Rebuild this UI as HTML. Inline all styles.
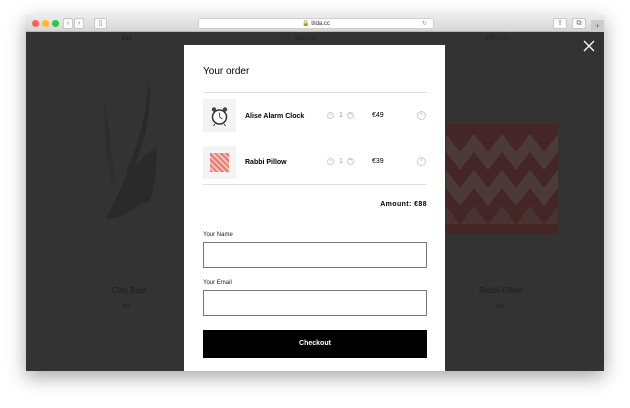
<!DOCTYPE html>
<html><head><meta charset="utf-8"><style>
*{margin:0;padding:0;box-sizing:border-box}
body{width:630px;height:408px;background:#fff;position:relative;overflow:hidden;font-family:"Liberation Sans",sans-serif}
.win{position:absolute;left:26px;top:15px;width:578px;height:356px;box-shadow:0 6px 18px rgba(0,0,0,.35);background:#333}
.tb{position:absolute;left:0;top:0;width:578px;height:17px;background:linear-gradient(#ececec,#d6d6d6);border-bottom:1px solid #b8b8b8}
.dot{position:absolute;top:5px;width:7px;height:7px;border-radius:50%}
.btn{position:absolute;top:3px;height:11px;background:#fbfbfb;border:1px solid #c8c8c8;border-radius:2px;font-size:7px;color:#777;text-align:center;line-height:9px}
.url{position:absolute;left:172px;top:3px;width:236px;height:11px;background:#fff;border:1px solid #d0d0d0;border-radius:3px;font-size:6px;text-align:center;line-height:10px;color:#333}
.content{position:absolute;left:0;top:17px;width:578px;height:339px;background:#333;overflow:hidden}
.modal{position:absolute;left:158px;top:13px;width:261px;height:330px;background:#fff}
.t{position:absolute;font-size:9px;color:#000}
.b{font-weight:bold;font-size:7px}
.line{position:absolute;left:19px;width:224px;height:1px;background:#e0e0e0}
.img{position:absolute;left:19px;width:33px;height:33px;background:#f3f3f3}
.ci{position:absolute;width:7px;height:7px;border:1px solid #ccc;border-radius:50%;font-size:6px;line-height:5px;text-align:center;color:#bbb}
.inp{position:absolute;left:19px;width:224px;height:26px;border:1px solid #777}
.lab{position:absolute;left:19px;font-size:6px;color:#222}
</style></head><body>
<div class="win">
 <div class="tb">
  <div class="dot" style="left:6px;background:#fc5f57"></div>
  <div class="dot" style="left:16px;background:#fdbc2e"></div>
  <div class="dot" style="left:26px;background:#29c840"></div>
  <div class="btn" style="left:37px;width:10px">‹</div>
  <div class="btn" style="left:48px;width:10px">›</div>
  <div class="btn" style="left:68px;width:13px">▯</div>
  <div class="url">🔒 tilda.cc<span style="position:absolute;right:6px;color:#999">↻</span></div>
  <div class="btn" style="left:527px;width:14px">⇧</div>
  <div class="btn" style="left:546px;width:14px">⧉</div>
  <div style="position:absolute;left:565px;top:5px;width:13px;height:12px;background:#ccc;font-size:9px;color:#777;text-align:center;line-height:12px">+</div>
 </div>
 <div class="content">
  <div style="position:absolute;left:96px;top:4px;font-size:6px;color:#222">€49</div>
  <div style="position:absolute;left:269px;top:4px;font-size:6px;color:#222">€69 <s style="color:#2a2a2a">€99</s></div>
  <div style="position:absolute;left:459px;top:4px;font-size:6px;color:#222">€79 <s style="color:#2a2a2a">€100</s></div>
  <svg style="position:absolute;left:70px;top:40px" width="70" height="170" viewBox="0 0 70 170">
   <path d="M8 25 C14 50 14 85 20 110 L16 112 C10 85 8 55 8 25Z" fill="#2e2e2e"/>
   <path d="M52 8 C58 30 50 70 34 105 L30 100 C44 70 52 35 52 8Z" fill="#2a2a2a"/>
   <path d="M32 100 C42 90 55 78 60 75 C62 95 58 115 54 130 L44 132 C34 140 22 148 10 146 C20 130 26 112 32 100Z" fill="#2a2a2a"/>
  </svg>
  <div style="position:absolute;left:86px;top:254px;font-size:8px;color:#1e1e1e">Clay Bust</div>
  <div style="position:absolute;left:96px;top:272px;font-size:5px;color:#1e1e1e">€57</div>
  <svg style="position:absolute;left:420px;top:92px" width="112" height="110" viewBox="0 0 112 110">
   <rect x="0" y="0" width="112" height="110" fill="#452626"/>
   <g fill="#4c3a3a">
    <path d="M0 10 L14 28 L28 10 L42 28 L56 10 L70 28 L84 10 L98 28 L112 10 V28 L98 46 L84 28 L70 46 L56 28 L42 46 L28 28 L14 46 L0 28Z"/>
    <path d="M0 46 L14 64 L28 46 L42 64 L56 46 L70 64 L84 46 L98 64 L112 46 V64 L98 82 L84 64 L70 82 L56 64 L42 82 L28 64 L14 82 L0 64Z"/>
    <path d="M0 82 L14 100 L28 82 L42 100 L56 82 L70 100 L84 82 L98 100 L112 82 V100 L0 100Z" opacity=".6"/>
   </g>
  </svg>
  <div style="position:absolute;left:453px;top:254px;font-size:8px;color:#1e1e1e">Rabbi Pillow</div>
  <div style="position:absolute;left:470px;top:272px;font-size:5px;color:#1e1e1e">€39</div>
  <svg style="position:absolute;left:557px;top:8px" width="12" height="12"><path d="M1 1L11 11M11 1L1 11" stroke="#fff" stroke-width="1.3"/></svg>
  <div class="modal">
   <div class="t" style="left:19px;top:21px;font-size:10px">Your order</div>
   <div class="line" style="top:47px"></div>
   <div class="img" style="top:54px">
    <svg width="33" height="33" viewBox="0 0 33 33"><circle cx="16.5" cy="18" r="7" fill="#fff" stroke="#333" stroke-width="1.5"/><circle cx="11" cy="10.5" r="2.2" fill="#444"/><circle cx="22" cy="10.5" r="2.2" fill="#444"/><path d="M16.5 18V13.5M16.5 18l3 2" stroke="#333" stroke-width="0.8"/><path d="M12 25l-1.5 2M21 25l1.5 2" stroke="#333"/></svg>
   </div>
   <div class="t b" style="left:61px;top:68px">Alise Alarm Clock</div>
   <div class="ci" style="left:143px;top:67px">−</div><div class="t" style="left:155px;top:67px;font-size:7px;color:#999">1</div><div class="ci" style="left:163px;top:67px">+</div>
   <div class="t" style="left:188px;top:67px;font-size:7px">€49</div>
   <div class="ci" style="left:233px;top:66px;width:9px;height:9px;line-height:7px">×</div>
   <div class="img" style="top:101px"><div style="position:absolute;left:7px;top:7px;width:19px;height:19px;background:repeating-linear-gradient(45deg,#e57a6e 0 2px,#f6c2bb 2px 4px)"></div></div>
   <div class="t b" style="left:61px;top:114px">Rabbi Pillow</div>
   <div class="ci" style="left:143px;top:113px">−</div><div class="t" style="left:155px;top:113px;font-size:7px;color:#999">1</div><div class="ci" style="left:163px;top:113px">+</div>
   <div class="t" style="left:188px;top:113px;font-size:7px">€39</div>
   <div class="ci" style="left:233px;top:112px;width:9px;height:9px;line-height:7px">×</div>
   <div class="line" style="top:139px"></div>
   <div class="t b" style="right:18px;top:156px;letter-spacing:.4px">Amount: €88</div>
   <div class="lab" style="top:187px">Your Name</div>
   <div class="inp" style="top:197px"></div>
   <div class="lab" style="top:235px">Your Email</div>
   <div class="inp" style="top:245px"></div>
   <div style="position:absolute;left:19px;top:285px;width:224px;height:28px;background:#000;color:#fff;font-size:7px;font-weight:bold;text-align:center;line-height:28px">Checkout</div>
  </div>
 </div>
</div>
</body></html>
